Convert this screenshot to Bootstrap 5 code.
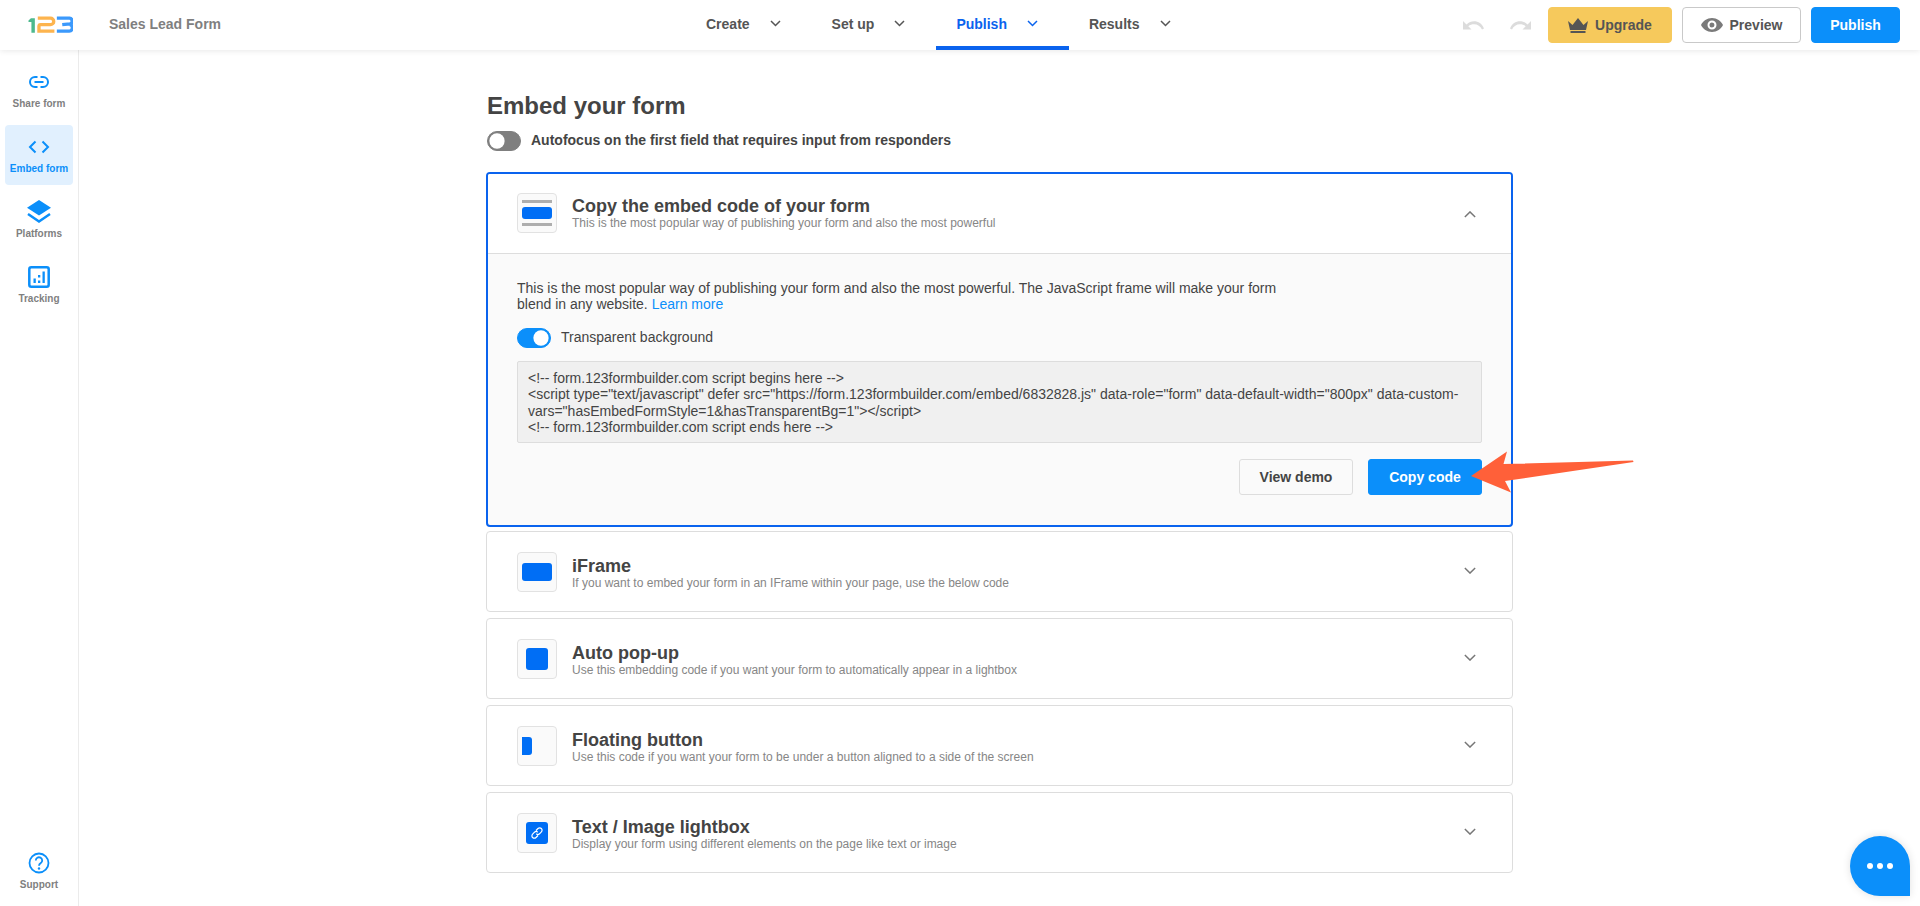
<!DOCTYPE html>
<html lang="en">
<head>
<meta charset="utf-8">
<title>Embed your form</title>
<link href="https://cdn.jsdelivr.net/npm/bootstrap@5.3.0/dist/css/bootstrap.min.css" rel="stylesheet">
<style>
html,body{height:100%;overflow:hidden}
body{font-family:"Liberation Sans",Arial,sans-serif;font-size:14px;color:#444;background:#fff}
.topbar{height:50px;background:#fff;box-shadow:0 1px 6px rgba(0,0,0,.09);position:relative;z-index:2}
.brand-area{flex:0 0 686px;padding-left:28px}
.form-name{margin-left:36px;font-size:14px;font-weight:700;color:#7f7f7f;position:relative;top:-1px}
.tab-item{height:50px;padding:0 31px 2px 20px;font-weight:700;font-size:14px;color:#555;text-decoration:none;gap:20px;border-bottom:4px solid transparent;border-top:4px solid transparent}
.tab-item.is-on{color:#0a63ee;border-bottom-color:#0a63ee}
.tab-item svg{width:11px;height:7px;margin-top:-2px}
.tool-area{padding-right:20px}
.hist-ico{width:21px;height:14px;margin-right:26px}
.hist-ico.last{margin-right:17px}
.tb-btn{height:36px;font-size:14px;font-weight:700;border-radius:4px;padding:0;display:flex;align-items:center;justify-content:center}
.tb-upgrade{width:124px;background:#f6c95c;border:1px solid #f6c95c;color:#555;gap:7px}
.tb-preview{width:119px;margin-left:10px;background:#fff;border:1px solid #c9c9c9;color:#555;gap:7px}
.tb-publish{width:89px;margin-left:10px;background:#0b8ffa;border:1px solid #0b8ffa;color:#fff}
.shell{height:calc(100vh - 50px)}
.side{flex:0 0 79px;width:79px;border-right:1px solid #ebebeb;padding:10px 0 5px}
.side-link{display:flex;flex-direction:column;align-items:center;height:60px;margin:0 5px 5px 5px;border-radius:4px;text-decoration:none;color:#7f7f7f;font-size:10px;font-weight:700;line-height:12px}
.side-ico{height:24px;margin-top:10px;margin-bottom:4px;display:flex;align-items:center;justify-content:center}
.side-link.is-on{background:#e1f0fe;color:#0b8ffa}
.main-col{width:1027px}
.page-title{font-size:24px;line-height:29px;font-weight:700;color:#444;margin:41px 0 0 1px}
.sw-row{min-height:20px;padding:0;margin:0}
.sw-row .form-check-input{width:34px;height:20px;margin:0;float:none;flex:none;box-shadow:none}
.sw-off .form-check-input{background-color:#7f7f7f;border-color:#7f7f7f;background-image:url("data:image/svg+xml,%3csvg xmlns='http://www.w3.org/2000/svg' viewBox='-4 -4 8 8'%3e%3ccircle r='3.4' fill='%23fff'/%3e%3c/svg%3e")}
.sw-on .form-check-input{background-color:#0b8ffa;border-color:#0b8ffa;background-image:url("data:image/svg+xml,%3csvg xmlns='http://www.w3.org/2000/svg' viewBox='-4 -4 8 8'%3e%3ccircle r='3.4' fill='%23fff'/%3e%3c/svg%3e")}
.sw-top{margin-top:10px;margin-left:1px;margin-bottom:21px;gap:10px}
.sw-top .form-check-label{font-weight:700;font-size:14px;color:#444}
.embed-card{border:1px solid #ddd;border-radius:4px;margin-bottom:6px;background:#fff}
.embed-card .card-head{padding:20px 30px 19px;gap:15px}
.embed-card .head-text{margin-top:1px}
.embed-card.is-open{border:2px solid #0a63ee;margin-bottom:4px;background:#fafafa}
.embed-card.is-open .card-head{padding:19px 29px 20px;background:#fff;border-bottom:1px solid #ddd;border-radius:2px 2px 0 0}
.embed-card.is-open .head-text{margin-top:0}
.thumb{width:40px;height:40px;flex:none;border:1px solid #e2e2e2;border-radius:4px;background:#fafafa;display:flex;flex-direction:column;justify-content:center;padding:0 4px;gap:4px}
.thumb-line{height:3px;background:#aeaeae;width:30px}
.thumb-bar{height:18px;width:30px;background:#006ef5;border-radius:3px}
.thumb-bar.slim{height:12px}
.thumb-square{width:22px;height:22px;background:#006ef5;border-radius:3px;align-self:center}
.thumb-side{width:10px;height:18px;background:#006ef5;border-radius:0 3px 3px 0}
.thumb-link{width:22px;height:22px;background:#006ef5;border-radius:3px;align-self:center;display:flex;align-items:center;justify-content:center}
.head-title{font-size:18px;line-height:20px;font-weight:700;color:#444;margin:0}
.head-sub{font-size:12px;line-height:14px;color:#868686;margin:0}
.head-chev{margin-left:auto;margin-right:6px;margin-top:-3px;width:12px;height:7px}
.is-open .head-chev{margin-top:2px}
.card-inner{padding:26px 29px 30px}
.lead-copy{max-width:770px;line-height:16px;margin:0 0 15px}
.lead-copy a{color:#0b8ffa;text-decoration:none}
.sw-code{gap:10px;margin-bottom:13px}
.sw-code .form-check-label{color:#444;font-size:14px}
.code-box{height:82px;background:#f0f0f0;border:1px solid #ddd;border-radius:2px;padding:8px 10px;font-size:14px;line-height:16.4px;color:#444;margin-bottom:16px}
.act-btn{height:36px;font-size:14px;font-weight:700;border-radius:3px;padding:0;display:flex;align-items:center;justify-content:center}
.act-demo{width:114px;background:#fafafa;border:1px solid #ddd;color:#444}
.act-copy{width:114px;margin-left:15px;background:#0b8ffa;border:1px solid #0b8ffa;color:#fff}
.arrow-over{position:absolute;left:1465px;top:445px;width:175px;height:55px;z-index:3;pointer-events:none}
.chat-fab{position:fixed;right:10px;bottom:10px;width:60px;height:60px;background:#0b8ffa;border-radius:50% 50% 0 50%;box-shadow:0 0 8px rgba(0,0,0,.12);display:flex;align-items:center;justify-content:center;gap:4px;z-index:4}
.chat-dot{width:6px;height:6px;background:#fff;border-radius:50%}
</style>
</head>
<body>
<header class="topbar d-flex align-items-center">
  <div class="brand-area d-flex align-items-center">
    <svg width="45" height="18" viewBox="0 0 46 18" aria-label="123 logo">
      <path d="M0.5 4.5 L3 2.2 H7 V17 H3.5 V6 H0.5Z" fill="#4db98e"/>
      <path d="M10 2h13a3.2 3.2 0 0 1 0 6.6H13a1.8 1.8 0 0 0-1.8 1.8V15.2H27" fill="none" stroke="#fdb44e" stroke-width="3.4"/>
      <path d="M29.5 2h12a3 3 0 0 1 1.5 5.8 L35 8.6 M43 8.6a3.4 3.4 0 0 1-1.5 6.6H29.5" fill="none" stroke="#3b99fc" stroke-width="3.4"/>
    </svg>
    <span class="form-name">Sales Lead Form</span>
  </div>
  <nav class="d-flex">
    <a class="tab-item d-flex align-items-center" href="#">Create<svg viewBox="0 0 11 7"><path d="M1 1l4.5 4.5L10 1" fill="none" stroke="#555" stroke-width="1.5"/></svg></a>
    <a class="tab-item d-flex align-items-center" href="#">Set up<svg viewBox="0 0 11 7"><path d="M1 1l4.5 4.5L10 1" fill="none" stroke="#555" stroke-width="1.5"/></svg></a>
    <a class="tab-item is-on d-flex align-items-center" href="#">Publish<svg viewBox="0 0 11 7"><path d="M1 1l4.5 4.5L10 1" fill="none" stroke="#0a63ee" stroke-width="1.5"/></svg></a>
    <a class="tab-item d-flex align-items-center" href="#">Results<svg viewBox="0 0 11 7"><path d="M1 1l4.5 4.5L10 1" fill="none" stroke="#555" stroke-width="1.5"/></svg></a>
  </nav>
  <div class="tool-area ms-auto d-flex align-items-center">
    <svg class="hist-ico" viewBox="0 0 21 14"><path d="M0 1v8.5h8.5L5.3 6.2C7 4.9 9 4.3 11 4.3c3.6 0 6.4 2 8 5.2l2-1C19 3.6 15.400 1.200 11 1.200 8.400 1.200 5.700 2.200 3.500 4.400Z" fill="#dcdcdc" transform="translate(0 2)"/></svg>
    <svg class="hist-ico last" viewBox="0 0 21 14"><path d="M21 1v8.5h-8.500L15.700 6.200C14 4.900 12 4.300 10 4.300c-3.600 0-6.400 2-8 5.200L0 8.500C2 3.600 5.600 1.200 10 1.200c2.600 0 5.300 1 7.500 3.200Z" fill="#dcdcdc" transform="translate(0 2)"/></svg>
    <button class="btn tb-btn tb-upgrade" type="button"><svg width="20" height="15" viewBox="0 0 20 15"><path d="M0 3l4.500 4L10 0l5.500 7L20 3l-2 9H2ZM2.500 13h15v2h-15Z" fill="#555"/></svg>Upgrade</button>
    <button class="btn tb-btn tb-preview" type="button"><svg width="22" height="14" viewBox="0 0 22 14"><path d="M11 0C6 0 2 3 0 7c2 4 6 7 11 7s9-3 11-7c-2-4-6-7-11-7Zm0 11.500A4.500 4.500 0 1 1 11 2.500a4.500 4.500 0 0 1 0 9Zm0-7a2.500 2.500 0 1 0 0 5 2.500 2.500 0 0 0 0-5Z" fill="#7a7a7a"/></svg>Preview</button>
    <button class="btn tb-btn tb-publish" type="button">Publish</button>
  </div>
</header>
<div class="shell d-flex">
  <aside class="side d-flex flex-column">
    <a class="side-link" href="#"><span class="side-ico"><svg width="22" height="14" viewBox="0 0 22 14"><path d="M9.500 2H7a5 5 0 0 0 0 10h2.500M12.500 2H15a5 5 0 0 1 0 10h-2.500M6.500 7h9" fill="none" stroke="#0b8ffa" stroke-width="2"/></svg></span>Share form</a>
    <a class="side-link is-on" href="#"><span class="side-ico"><svg width="22" height="14" viewBox="0 0 22 14"><path d="M7.500 1.500L2 7l5.500 5.500M14.500 1.500L20 7l-5.500 5.500" fill="none" stroke="#0b8ffa" stroke-width="2"/></svg></span>Embed form</a>
    <a class="side-link" href="#"><span class="side-ico"><svg width="24" height="24" viewBox="0 0 24 24"><path d="M12 0l12 7.700L12 15.500 0 7.700Z" fill="#0b8ffa"/><path d="M1 14l11 7.500L23 14" fill="none" stroke="#0b8ffa" stroke-width="2.500"/></svg></span>Platforms</a>
    <a class="side-link" href="#"><span class="side-ico"><svg width="22" height="22" viewBox="0 0 22 22"><rect x="1.300" y="1.300" width="19.400" height="19.400" rx="2" fill="none" stroke="#0b8ffa" stroke-width="2.500"/><path d="M5.500 12.500h2.300v4.500H5.500ZM10 9h2.300v2.500H10ZM10 14.500h2.300V17H10ZM14.500 5.500h2.300V17h-2.300Z" fill="#0b8ffa"/></svg></span>Tracking</a>
    <a class="side-link mt-auto mb-0" href="#"><span class="side-ico"><svg width="22" height="22" viewBox="0 0 22 22"><circle cx="11" cy="11" r="9.500" fill="none" stroke="#0b8ffa" stroke-width="1.800"/><path d="M7.800 8.500a3.200 3.200 0 1 1 5 2.600c-1.200.8-1.800 1.400-1.800 2.700" fill="none" stroke="#0b8ffa" stroke-width="1.800"/><circle cx="11" cy="16.500" r="1.200" fill="#0b8ffa"/></svg></span>Support</a>
  </aside>
  <main class="flex-grow-1">
    <div class="main-col mx-auto">
      <h1 class="page-title">Embed your form</h1>
      <div class="form-check form-switch sw-row sw-off sw-top d-flex align-items-center">
        <input class="form-check-input" type="checkbox" role="switch" id="autoFocus">
        <label class="form-check-label" for="autoFocus">Autofocus on the first field that requires input from responders</label>
      </div>

      <section class="card embed-card is-open">
        <div class="card-head d-flex flex-row align-items-center">
          <div class="thumb"><div class="thumb-line"></div><div class="thumb-bar slim"></div><div class="thumb-line"></div></div>
          <div class="head-text">
            <h2 class="head-title">Copy the embed code of your form</h2>
            <p class="head-sub">This is the most popular way of publishing your form and also the most powerful</p>
          </div>
          <svg class="head-chev" viewBox="0 0 14 8"><path d="M1 7l6-6 6 6" fill="none" stroke="#777" stroke-width="1.700"/></svg>
        </div>
        <div class="card-inner">
          <p class="lead-copy">This is the most popular way of publishing your form and also the most powerful. The JavaScript frame will make your form blend in any website. <a href="#">Learn more</a></p>
          <div class="form-check form-switch sw-row sw-on sw-code d-flex align-items-center">
            <input class="form-check-input" type="checkbox" role="switch" id="transBg" checked>
            <label class="form-check-label" for="transBg">Transparent background</label>
          </div>
          <div class="code-box">&lt;!-- form.123formbuilder.com script begins here --&gt;<br>&lt;script type="text/javascript" defer src="https://form.123formbuilder.com/embed/6832828.js" data-role="form" data-default-width="800px" data-custom-vars="hasEmbedFormStyle=1&amp;hasTransparentBg=1"&gt;&lt;/script&gt;<br>&lt;!-- form.123formbuilder.com script ends here --&gt;</div>
          <div class="d-flex justify-content-end">
            <button class="btn act-btn act-demo" type="button">View demo</button>
            <button class="btn act-btn act-copy" type="button">Copy code</button>
          </div>
        </div>
      </section>

      <section class="card embed-card">
        <div class="card-head d-flex flex-row align-items-center">
          <div class="thumb"><div class="thumb-bar"></div></div>
          <div class="head-text"><h2 class="head-title">iFrame</h2><p class="head-sub">If you want to embed your form in an IFrame within your page, use the below code</p></div>
          <svg class="head-chev" viewBox="0 0 14 8"><path d="M1 1l6 6 6-6" fill="none" stroke="#777" stroke-width="1.700"/></svg>
        </div>
      </section>
      <section class="card embed-card">
        <div class="card-head d-flex flex-row align-items-center">
          <div class="thumb"><div class="thumb-square"></div></div>
          <div class="head-text"><h2 class="head-title">Auto pop-up</h2><p class="head-sub">Use this embedding code if you want your form to automatically appear in a lightbox</p></div>
          <svg class="head-chev" viewBox="0 0 14 8"><path d="M1 1l6 6 6-6" fill="none" stroke="#777" stroke-width="1.700"/></svg>
        </div>
      </section>
      <section class="card embed-card">
        <div class="card-head d-flex flex-row align-items-center">
          <div class="thumb"><div class="thumb-side"></div></div>
          <div class="head-text"><h2 class="head-title">Floating button</h2><p class="head-sub">Use this code if you want your form to be under a button aligned to a side of the screen</p></div>
          <svg class="head-chev" viewBox="0 0 14 8"><path d="M1 1l6 6 6-6" fill="none" stroke="#777" stroke-width="1.700"/></svg>
        </div>
      </section>
      <section class="card embed-card">
        <div class="card-head d-flex flex-row align-items-center">
          <div class="thumb"><div class="thumb-link"><svg width="14" height="14" viewBox="0 0 14 14"><path d="M6 4.500l2-2a2.300 2.300 0 0 1 3.400 3.300L9.500 7.800a2.300 2.300 0 0 1-3.200 0M8 9.500l-2 2a2.300 2.300 0 0 1-3.400-3.300l1.900-2a2.300 2.300 0 0 1 3.200 0" fill="none" stroke="#fff" stroke-width="1.200"/></svg></div></div>
          <div class="head-text"><h2 class="head-title">Text / Image lightbox</h2><p class="head-sub">Display your form using different elements on the page like text or image</p></div>
          <svg class="head-chev" viewBox="0 0 14 8"><path d="M1 1l6 6 6-6" fill="none" stroke="#777" stroke-width="1.700"/></svg>
        </div>
      </section>
    </div>
  </main>
</div>
<svg class="arrow-over" viewBox="0 0 175 55"><path d="M6 31 L42 6.500 L38.500 19 L168 15.500 L168.500 17 L40 36 L46 47.500Z" fill="#ff6039"/></svg>
<div class="chat-fab"><span class="chat-dot"></span><span class="chat-dot"></span><span class="chat-dot"></span></div>
<script src="https://cdn.jsdelivr.net/npm/bootstrap@5.3.0/dist/js/bootstrap.bundle.min.js"></script>
</body>
</html>
